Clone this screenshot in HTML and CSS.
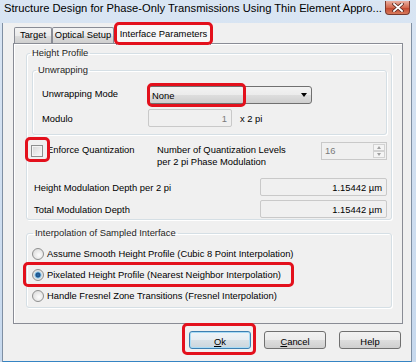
FILE: index.html
```html
<!DOCTYPE html>
<html lang="en">
  <head>
    <meta charset="UTF-8" />
    <title>Structure Design</title>
    <link rel="stylesheet" href="styles.css">
  </head>
  <body>
    <div class="window">
      <!-- title bar -->
      <div class="titlebar">
        <span class="title">Structure Design for Phase-Only Transmissions Using Thin Element Appro...</span>
        <span class="close">
          <svg width="12" height="9" viewBox="0 0 12 9">
            <path d="M2 1 L10 8 M10 1 L2 8" stroke="#5a2a22" stroke-width="3.4" stroke-linecap="square"/>
            <path d="M2 1 L10 8 M10 1 L2 8" stroke="#fff" stroke-width="1.8" stroke-linecap="square"/>
          </svg>
        </span>
      </div>

      <div class="client">
        <!-- tabs -->
        <div class="tabs">
          <div class="tab t-target">Target</div>
          <div class="tab t-optical">Optical Setup</div>
          <div class="tab active">Interface Parameters<span class="mark m-tab"></span></div>
        </div>

        <div class="panel">
          <fieldset class="group hp">
            <legend>Height Profile</legend>
            <fieldset class="group unwrap">
              <legend>Unwrapping</legend>
              <div class="urow first">
                <span class="lbl up2">Unwrapping Mode</span>
                <div class="select">None<span class="arrow"></span><span class="mark m-select"></span></div>
              </div>
              <div class="urow">
                <span class="lbl">Modulo</span>
                <div class="field modulo">1</div>
                <span class="unit">x 2 pi</span>
              </div>
            </fieldset>

            <div class="quant">
              <span class="check"><span class="mark m-check"></span></span>
              <span class="qlabel">Enforce Quantization</span>
              <span class="qlevels">Number of Quantization Levels<br>per 2 pi Phase Modulation</span>
              <div class="spin">
                <span class="spin-val">16</span>
                <span class="spin-btns"><span class="up"></span><span class="down"></span></span>
              </div>
            </div>

            <div class="drow first">
              <span class="dlbl">Height Modulation Depth per 2 pi</span>
              <div class="field value">1.15442 µm</div>
            </div>
            <div class="drow">
              <span class="dlbl">Total Modulation Depth</span>
              <div class="field value">1.15442 µm</div>
            </div>
          </fieldset>

          <fieldset class="group interp">
            <legend>Interpolation of Sampled Interface</legend>
            <div class="rrow first"><span class="radio"></span>Assume Smooth Height Profile (Cubic 8 Point Interpolation)</div>
            <div class="rrow"><span class="radio on"></span>Pixelated Height Profile (Nearest Neighbor Interpolation)<span class="mark m-radio"></span></div>
            <div class="rrow"><span class="radio"></span>Handle Fresnel Zone Transitions (Fresnel Interpolation)</div>
          </fieldset>
        </div>

        <!-- buttons -->
        <div class="buttons">
          <button class="btn default"><u>O</u>k<span class="mark m-ok"></span></button>
          <button class="btn"><u>C</u>ancel</button>
          <button class="btn">Help</button>
        </div>
      </div>
    </div>
  </body>
</html>
```

FILE: styles.css
```css
* {
  margin: 0;
  padding: 0;
  box-sizing: border-box;
}
body {
  background-color: #cddcee;
  font-family: "Liberation Sans", Arial, sans-serif;
  font-size: 9.4px;
  color: #000;
}
.window {
  width: 416px;
  height: 362px;
  background: linear-gradient(#d9e5f3, #c7d9ee);
}

/* title bar */
.titlebar {
  display: flex;
  align-items: flex-start;
  height: 20px;
  padding-left: 4px;
}
.title {
  font-size: 11.2px;
  line-height: 17px;
  color: #000;
  white-space: nowrap;
}
.close {
  display: flex;
  justify-content: center;
  align-items: center;
  width: 25px;
  height: 14px;
  margin-left: auto;
  margin-right: 6px;
  margin-top: 1px;
  border: 1px solid #7a3a2f;
  border-top: none;
  border-radius: 0 0 4px 4px;
  background: linear-gradient(#eab0a2, #d3694f 50%, #c2432b 51%, #d77a5c);
}

/* client */
.client {
  width: 410px;
  height: 340px;
  margin-left: 2px;
  border-left: 1px solid #7f8fa3;
  border-right: 1px solid #7f8fa3;
  border-bottom: 2px solid #3584c3;
  background-color: #f0f0f0;
}
.tabs {
  display: flex;
  align-items: flex-end;
  height: 20px;
  margin-top: 3px;
  padding-left: 11px;
}
.tab {
  height: 16px;
  line-height: 14px;
  text-align: center;
  border: 1px solid #898c95;
  border-bottom: none;
  border-radius: 2px 2px 0 0;
  background: linear-gradient(#f3f3f3, #ebebeb 50%, #dddddd 51%, #cfcfcf);
}
.t-target {
  width: 38px;
}
.t-optical {
  width: 62px;
}
.tab.active {
  position: relative;
  z-index: 2;
  width: 95px;
  height: 22px;
  margin-left: 2px;
  margin-bottom: -2px;
  padding-top: 4px;
  line-height: 12px;
  background: #f7f7f7;
}

.panel {
  width: 390px;
  height: 281px;
  margin-left: 10px;
  padding: 3px 10px 0 12px;
  border: 1px solid #898c95;
  box-shadow: inset 1px 1px 0 #fff;
  background-color: #f0f0f0;
}

/* group boxes */
.group {
  min-width: 0;
  border: 1px solid #d5dfe5;
  border-radius: 3px;
  box-shadow: inset 1px 1px 0 #fff, 1px 1px 0 #fff;
}
.group legend {
  padding: 0 2px;
  margin-left: 3px;
  line-height: 12px;
  color: #1e1e1e;
}
.hp {
  height: 173px;
}
.unwrap {
  height: 71px;
  margin: 5px 4px 0 5px;
}
.interp {
  height: 81px;
  margin-top: 7px;
}
.interp legend {
  margin-left: 6px;
}

/* unwrapping rows */
.urow {
  display: flex;
  align-items: center;
  height: 18px;
  margin-top: 5px;
  padding-left: 9px;
}
.urow.first {
  margin-top: 10px;
}
.lbl {
  width: 106px;
}
.lbl.up2 {
  margin-bottom: 4px;
}
.select {
  position: relative;
  display: flex;
  align-items: center;
  width: 164px;
  height: 18px;
  padding-left: 3px;
  border: 1px solid #707070;
  border-radius: 3px;
  background: linear-gradient(#f2f2f2, #ebebeb 50%, #dddddd 51%, #cfcfcf);
}
.arrow {
  margin-left: auto;
  margin-right: 4px;
  width: 0;
  height: 0;
  border-left: 3.5px solid transparent;
  border-right: 3.5px solid transparent;
  border-top: 4px solid #000;
}
.field {
  display: flex;
  align-items: center;
  justify-content: flex-end;
  height: 18px;
  padding-right: 4px;
  border: 1px solid #c9c9c9;
  border-radius: 2px;
  background-color: #f0f0f0;
}
.modulo {
  width: 84px;
  color: #7a7a7a;
}
.unit {
  margin-left: 8px;
}

/* quantization */
.quant {
  display: flex;
  align-items: flex-start;
  height: 26px;
  margin: 7px 4px 0 4px;
}
.check {
  position: relative;
  width: 12px;
  height: 12px;
  margin-top: 3px;
  border: 1px solid #8e8f8f;
  background: linear-gradient(135deg, #d6d6d6, #fbfbfb);
  box-shadow: inset 0 0 0 1px #f4f4f4;
}
.qlabel {
  width: 110px;
  margin-left: 4px;
  margin-top: 2px;
  line-height: 12px;
}
.qlevels {
  margin-top: 2px;
  line-height: 12px;
}
.spin {
  display: flex;
  width: 66px;
  height: 18px;
  margin-left: auto;
  border: 1px solid #c9c9c9;
  background-color: #f0f0f0;
}
.spin-val {
  flex: 1;
  padding-left: 3px;
  line-height: 16px;
  color: #7a7a7a;
}
.spin-btns {
  display: flex;
  flex-direction: column;
  width: 14px;
  padding: 1px;
}
.up,
.down {
  flex: 1;
  display: flex;
  justify-content: center;
  align-items: center;
  border: 1px solid #d2d2d2;
  background-color: #f4f4f4;
}
.up::after {
  content: "";
  border-left: 2.5px solid transparent;
  border-right: 2.5px solid transparent;
  border-bottom: 3px solid #a0a0a0;
}
.down::after {
  content: "";
  border-left: 2.5px solid transparent;
  border-right: 2.5px solid transparent;
  border-top: 3px solid #a0a0a0;
}

/* depth rows */
.drow {
  display: flex;
  align-items: center;
  height: 18px;
  margin: 4px 4px 0 7px;
}
.drow.first {
  margin-top: 10px;
}
.value {
  width: 127px;
  margin-left: auto;
}

/* radios */
.rrow {
  position: relative;
  display: flex;
  align-items: center;
  height: 21px;
  margin-left: 5px;
}
.rrow.first {
  margin-top: 4px;
}
.radio {
  width: 12px;
  height: 12px;
  margin-right: 3px;
  border: 1px solid #8e8f8f;
  border-radius: 50%;
  background: radial-gradient(circle at 60% 60%, #fdfdfd, #d4d4d4);
}
.radio.on {
  background: radial-gradient(circle, #2a6fb0 0, #1b4f86 2px, #86c4ea 3px, #e6e6e6 4px, #d4d4d4);
}

/* buttons */
.buttons {
  display: flex;
  justify-content: flex-end;
  gap: 13px;
  margin-top: 7px;
  padding-right: 10px;
}
.btn {
  position: relative;
  width: 62px;
  height: 18px;
  padding-top: 2px;
  font-family: "Liberation Sans", Arial, sans-serif;
  font-size: 9.4px;
  color: #000;
  border: 1px solid #707070;
  border-radius: 3px;
  background: linear-gradient(#f2f2f2, #ebebeb 50%, #dddddd 51%, #cfcfcf);
}
.btn.default {
  border-color: #3c7fb1;
  box-shadow: inset 0 0 0 1px #a9dcf6;
  background: linear-gradient(#eef4f8, #e6edf2 50%, #d8e1e7 51%, #cbd5dc);
}

/* red highlight marks */
.mark {
  position: absolute;
  border: 3px solid #e3101c;
  border-radius: 5px;
  pointer-events: none;
}
.m-tab {
  left: -3px;
  right: -3px;
  top: -2px;
  bottom: 0;
}
.m-select {
  left: -2px;
  top: -4px;
  width: 99px;
  height: 24px;
}
.m-check {
  left: -7px;
  top: -9px;
  width: 25px;
  height: 25px;
}
.m-radio {
  left: -9px;
  top: -2px;
  width: 271px;
  height: 25px;
}
.m-ok {
  left: -8px;
  top: -9px;
  width: 74px;
  height: 32px;
}
```
